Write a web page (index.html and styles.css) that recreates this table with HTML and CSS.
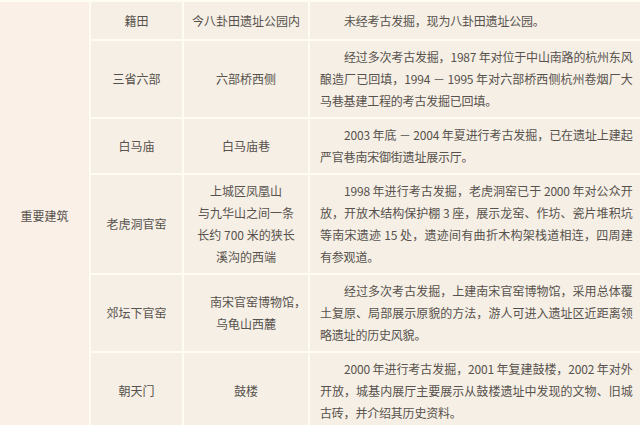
FILE: index.html
```html
<!DOCTYPE html>
<html lang="zh-CN">
<head>
<meta charset="utf-8">
<title>重要建筑</title>
<link rel="stylesheet" href="styles.css">
</head>
<body>
<div class="table">
  <div class="cell group">重要建筑</div>

  <div class="cell name first">籍田</div>
  <div class="cell place first">今八卦田遗址公园内</div>
  <div class="cell desc first">未经考古发掘，现为八卦田遗址公园。</div>

  <div class="cell name">三省六部</div>
  <div class="cell place">六部桥西侧</div>
  <div class="cell desc">经过多次考古发掘，1987 年对位于中山南路的杭州东风酿造厂已回填，1994 － 1995 年对六部桥西侧杭州卷烟厂大马巷基建工程的考古发掘已回填。</div>

  <div class="cell name">白马庙</div>
  <div class="cell place">白马庙巷</div>
  <div class="cell desc">2003 年底 － 2004 年夏进行考古发掘，已在遗址上建起严官巷南宋御街遗址展示厅。</div>

  <div class="cell name">老虎洞官窑</div>
  <div class="cell place">上城区凤凰山<br>与九华山之间一条<br>长约 700 米的狭长<br>溪沟的西端</div>
  <div class="cell desc">1998 年进行考古发掘，老虎洞窑已于 2000 年对公众开放，开放木结构保护棚 3 座，展示龙窑、作坊、瓷片堆积坑等南宋遗迹 15 处，遗迹间有曲折木构架栈道相连，四周建有参观道。</div>

  <div class="cell name">郊坛下官窑</div>
  <div class="cell place indented">南宋官窑博物馆，<br>乌龟山西麓</div>
  <div class="cell desc">经过多次考古发掘，上建南宋官窑博物馆，采用总体覆土复原、局部展示原貌的方法，游人可进入遗址区近距离领略遗址的历史风貌。</div>

  <div class="cell name">朝天门</div>
  <div class="cell place">鼓楼</div>
  <div class="cell desc">2000 年进行考古发掘，2001 年复建鼓楼，2002 年对外开放，城基内展厅主要展示从鼓楼遗址中发现的文物、旧城古砖，并介绍其历史资料。</div>
</div>
</body>
</html>
```

FILE: styles.css
```css
html, body {
  margin: 0;
  padding: 0;
  overflow: hidden;
  background: #fffcf4;
}

body {
  width: 640px;
  font-family: "Noto Sans CJK SC", sans-serif;
  font-size: 12px;
  line-height: 22px;
  color: #57524d;
}

.table {
  display: grid;
  grid-template-columns: 89px 91px 124px 1fr;
  gap: 2px;
  padding-top: 2px;
  background: #fffcf4;
}

.cell {
  background: #f6efe5;
  padding: 5px 0;
}

.group {
  grid-row: span 6;
  background: #faf0e8;
  display: flex;
  align-items: center;
  justify-content: center;
}

.name,
.place {
  display: flex;
  align-items: center;
  justify-content: center;
  text-align: center;
}

.indented {
  text-indent: 2em;
}

.desc {
  padding: 5px 7.5px 5px 10px;
  text-indent: 2em;
  text-align: justify;
  letter-spacing: -0.2px;
}

.first {
  padding-top: 8px;
  padding-bottom: 7px;
}
```
